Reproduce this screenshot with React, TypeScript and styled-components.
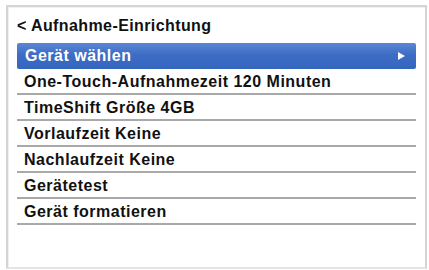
import styled, { createGlobalStyle } from "styled-components";

const GlobalStyle = createGlobalStyle`
    html, body {
        margin: 0;
        padding: 0;
        background: #ffffff;
    }
    body {
        font-family: "Liberation Sans", Arial, sans-serif;
    }
`

const Screen = styled.div`
    width: 429px;
    height: 270px;
    padding: 5px 2px 0 6px;
    box-sizing: border-box;
    background: #ffffff;
`

const Frame = styled.div`
    height: 264px;
    box-sizing: border-box;
    border: 2px solid #d4d4d4;
    border-bottom-color: #e4e4e4;
    box-shadow: inset 1px 1px 0 #f0f0f0;
    padding: 10px 9px 0 9px;
    display: flex;
    flex-direction: column;
`

const Title = styled.div`
    font-size: 16px;
    letter-spacing: 0.4px;
    font-weight: bold;
    color: #111;
    line-height: 18px;
    margin-bottom: 8px;
`

const Menu = styled.div`
    display: flex;
    flex-direction: column;
`

const Item = styled.div<{ $selected?: boolean }>`
    height: 26px;
    box-sizing: border-box;
    display: flex;
    align-items: center;
    justify-content: space-between;
    font-size: 16px;
    letter-spacing: 0.5px;
    font-weight: bold;
    padding: ${p => p.$selected ? '0 8px 0 8px' : '2px 0 0 7px'};
    color: ${p => p.$selected ? '#ffffff' : '#111111'};
    background: ${p => p.$selected ? 'linear-gradient(#5b87d4, #3d6cc4 45%, #3566bf)' : 'transparent'};
    border-radius: ${p => p.$selected ? '2px' : '0'};
    border-bottom: ${p => p.$selected ? 'none' : '2px solid #a9a9a9'};
`

const Arrow = styled.span`
    width: 0;
    height: 0;
    border-top: 4px solid transparent;
    border-bottom: 4px solid transparent;
    border-left: 7px solid #ffffff;
    margin-right: 3px;
`

const items = [
    'Gerät wählen',
    'One-Touch-Aufnahmezeit 120 Minuten',
    'TimeShift Größe 4GB',
    'Vorlaufzeit Keine',
    'Nachlaufzeit Keine',
    'Gerätetest',
    'Gerät formatieren',
]

const App = () => {
    return <>
        <GlobalStyle />
        <Screen>
            <Frame>
                <Title>{'< Aufnahme-Einrichtung'}</Title>
                <Menu>
                    {items.map((label, i) =>
                        <Item key={label} $selected={i === 0}>
                            <span>{label}</span>
                            {i === 0 && <Arrow />}
                        </Item>
                    )}
                </Menu>
            </Frame>
        </Screen>
    </>
}

export default App;
